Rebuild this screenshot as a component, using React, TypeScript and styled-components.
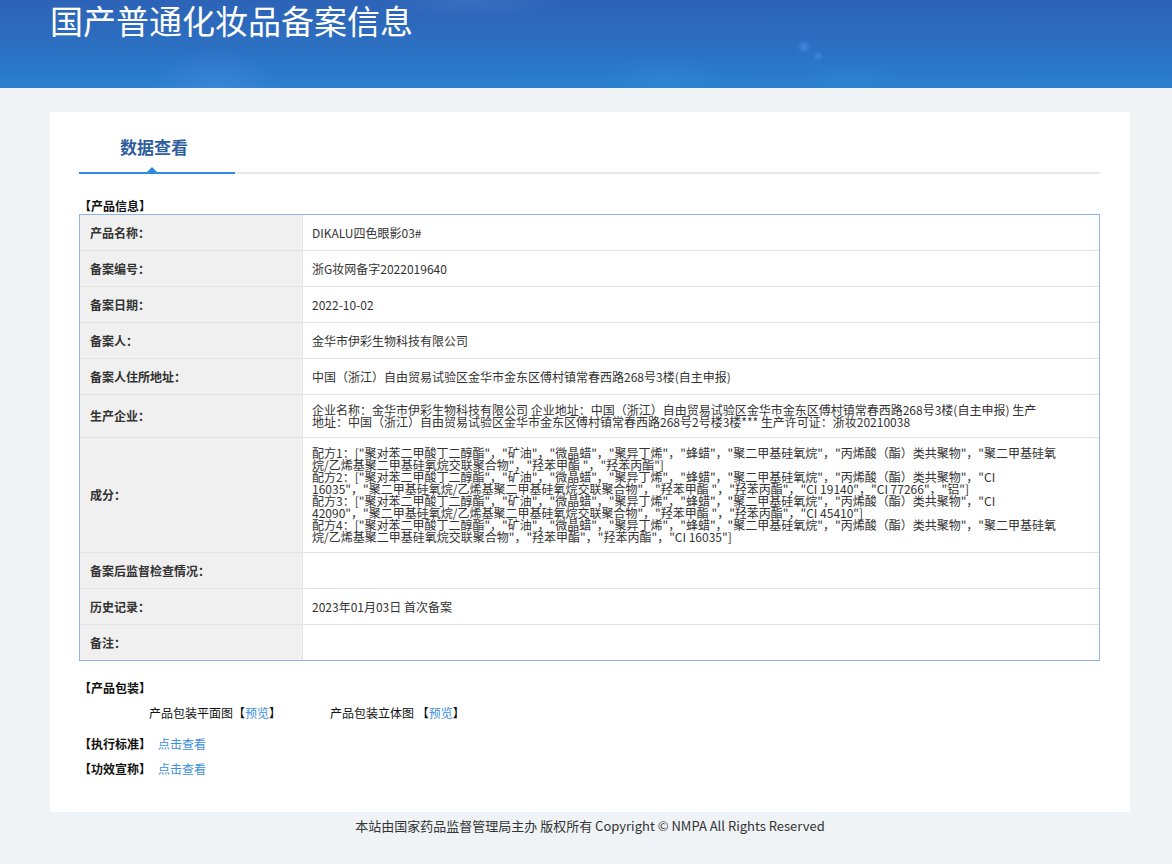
import React from "react";
import styled, { createGlobalStyle } from "styled-components";

const GlobalStyle = createGlobalStyle`
  html, body { margin: 0; padding: 0; background: #eff3f6; }
  body {
    font-family: "Noto Sans CJK SC", "Microsoft YaHei", sans-serif;
    color: #333;
  }
  * { box-sizing: border-box; }
`;

const Header = styled.header`
  height: 88px;
  padding-left: 50px;
  background:
    radial-gradient(ellipse 95px 75px at 215px 100px, rgba(95, 150, 235, 0.35), transparent 70%),
    radial-gradient(ellipse 90px 45px at 665px 85px, rgba(55, 150, 220, 0.28), transparent 70%),
    radial-gradient(ellipse 70px 25px at 850px 80px, rgba(55, 150, 220, 0.2), transparent 70%),
    radial-gradient(circle 7px at 804px 47px, rgba(70, 140, 225, 0.85), transparent 100%),
    radial-gradient(circle 5px at 818px 56px, rgba(70, 140, 225, 0.85), transparent 100%),
    radial-gradient(ellipse 130px 28px at 470px 0px, rgba(85, 130, 210, 0.35), transparent 70%),
    linear-gradient(180deg, #2d63b6 0%, #2c70c2 55%, #2a80cf 100%);
`;

const Title = styled.h1`
  margin: 0;
  font-size: 33px;
  line-height: 40px;
  font-weight: 400;
  color: #fff;
`;

const Main = styled.main`
  width: 1080px;
  margin: 24px 0 0 50px;
`;

const Card = styled.section`
  background: #fff;
  padding: 0 30px 35px 29px;
`;

const TabBar = styled.div`
  display: flex;
  padding-top: 23px;
  border-bottom: 2px solid #e8e8e8;
`;

const Tab = styled.div`
  position: relative;
  width: 156px;
  padding: 0 0 13px 41px;
  margin-bottom: -2px;
  border-bottom: 2px solid #2f8ae0;
  font-size: 17px;
  line-height: 24px;
  font-weight: 700;
  color: #2f5e9f;

  &::after {
    content: "";
    position: absolute;
    left: 68px;
    bottom: 0;
    border-left: 5px solid transparent;
    border-right: 5px solid transparent;
    border-bottom: 5px solid #2f8ae0;
  }
`;

const SectionTitle = styled.div<{ $top: number }>`
  margin-top: ${(p) => p.$top}px;
  font-size: 12px;
  line-height: 16px;
  font-weight: 700;
  color: #111;
`;

const Table = styled.div`
  border: 1px solid #8db6e8;
`;

const Row = styled.div`
  display: grid;
  grid-template-columns: 223px 1fr;
  min-height: 36px;
  border-bottom: 1px solid #e3e3e3;
  &:last-child { border-bottom: none; min-height: 35px; }
`;

const LabelCell = styled.div`
  display: flex;
  align-items: center;
  padding: 9px 10px;
  background: #f0f0f0;
  border-right: 1px solid #e3e3e3;
  font-size: 12px;
  line-height: 12px;
  font-weight: 700;
  color: #333;
`;

const ValueCell = styled.div`
  display: flex;
  flex-direction: column;
  justify-content: center;
  padding: 9px 9px;
  font-size: 12px;
  line-height: 12px;
  color: #333;
`;

const Line = styled.span`
  display: block;
`;

const InfoRow = styled.div<{ $top: number; $indent?: number }>`
  display: flex;
  align-items: center;
  margin-top: ${(p) => p.$top}px;
  padding-left: ${(p) => p.$indent ?? 0}px;
  font-size: 12px;
  line-height: 16px;
  color: #111;
`;

const BoldLabel = styled.span`
  font-weight: 700;
  margin-right: 7px;
`;

const PackItem = styled.span<{ $gap?: number }>`
  margin-left: ${(p) => p.$gap ?? 0}px;
`;

const Link = styled.a`
  color: #3b8ee0;
  text-decoration: none;
  cursor: pointer;
`;

const Footer = styled.footer`
  padding-top: 5px;
  text-align: center;
  font-size: 13px;
  line-height: 18px;
  color: #333;
`;

type RowData = { label: string; lines: string[] };

const rows: RowData[] = [
  { label: "产品名称：", lines: ["DIKALU四色眼影03#"] },
  { label: "备案编号：", lines: ["浙G妆网备字2022019640"] },
  { label: "备案日期：", lines: ["2022-10-02"] },
  { label: "备案人：", lines: ["金华市伊彩生物科技有限公司"] },
  { label: "备案人住所地址：", lines: ["中国（浙江）自由贸易试验区金华市金东区傅村镇常春西路268号3楼(自主申报)"] },
  {
    label: "生产企业：",
    lines: [
      "企业名称：金华市伊彩生物科技有限公司 企业地址：中国（浙江）自由贸易试验区金华市金东区傅村镇常春西路268号3楼(自主申报) 生产",
      "地址：中国（浙江）自由贸易试验区金华市金东区傅村镇常春西路268号2号楼3楼*** 生产许可证：浙妆20210038",
    ],
  },
  {
    label: "成分：",
    lines: [
      "配方1：[\"聚对苯二甲酸丁二醇酯\"，\"矿油\"，\"微晶蜡\"，\"聚异丁烯\"，\"蜂蜡\"，\"聚二甲基硅氧烷\"，\"丙烯酸（酯）类共聚物\"，\"聚二甲基硅氧",
      "烷/乙烯基聚二甲基硅氧烷交联聚合物\"，\"羟苯甲酯 \"，\"羟苯丙酯\"]",
      "配方2：[\"聚对苯二甲酸丁二醇酯\"，\"矿油\"，\"微晶蜡\"，\"聚异丁烯\"，\"蜂蜡\"，\"聚二甲基硅氧烷\"，\"丙烯酸（酯）类共聚物\"，\"CI",
      "16035\"，\"聚二甲基硅氧烷/乙烯基聚二甲基硅氧烷交联聚合物\"，\"羟苯甲酯 \"，\"羟苯丙酯\"，\"CI 19140\"，\"CI 77266\"，\"铝\"]",
      "配方3：[\"聚对苯二甲酸丁二醇酯\"，\"矿油\"，\"微晶蜡\"，\"聚异丁烯\"，\"蜂蜡\"，\"聚二甲基硅氧烷\"，\"丙烯酸（酯）类共聚物\"，\"CI",
      "42090\"，\"聚二甲基硅氧烷/乙烯基聚二甲基硅氧烷交联聚合物\"，\"羟苯甲酯 \"，\"羟苯丙酯\"，\"CI 45410\"]",
      "配方4：[\"聚对苯二甲酸丁二醇酯\"，\"矿油\"，\"微晶蜡\"，\"聚异丁烯\"，\"蜂蜡\"，\"聚二甲基硅氧烷\"，\"丙烯酸（酯）类共聚物\"，\"聚二甲基硅氧",
      "烷/乙烯基聚二甲基硅氧烷交联聚合物\"，\"羟苯甲酯\"，\"羟苯丙酯\"，\"CI 16035\"]",
    ],
  },
  { label: "备案后监督检查情况：", lines: [] },
  { label: "历史记录：", lines: ["2023年01月03日 首次备案"] },
  { label: "备注：", lines: [] },
];

export default function App() {
  return (
    <>
      <GlobalStyle />
      <Header>
        <Title>国产普通化妆品备案信息</Title>
      </Header>
      <Main>
        <Card>
          <TabBar>
            <Tab>数据查看</Tab>
          </TabBar>
          <SectionTitle $top={24}>【产品信息】</SectionTitle>
          <Table>
            {rows.map((r) => (
              <Row key={r.label}>
                <LabelCell>{r.label}</LabelCell>
                <ValueCell>
                  {r.lines.map((l, i) => (
                    <Line key={i}>{l}</Line>
                  ))}
                </ValueCell>
              </Row>
            ))}
          </Table>
          <SectionTitle $top={19}>【产品包装】</SectionTitle>
          <InfoRow $top={9} $indent={70}>
            <PackItem>
              产品包装平面图【<Link>预览</Link>】
            </PackItem>
            <PackItem $gap={49}>
              产品包装立体图 【<Link>预览</Link>】
            </PackItem>
          </InfoRow>
          <InfoRow $top={15}>
            <BoldLabel>【执行标准】</BoldLabel>
            <Link>点击查看</Link>
          </InfoRow>
          <InfoRow $top={9}>
            <BoldLabel>【功效宣称】</BoldLabel>
            <Link>点击查看</Link>
          </InfoRow>
        </Card>
        <Footer>本站由国家药品监督管理局主办 版权所有 Copyright © NMPA All Rights Reserved</Footer>
      </Main>
    </>
  );
}
